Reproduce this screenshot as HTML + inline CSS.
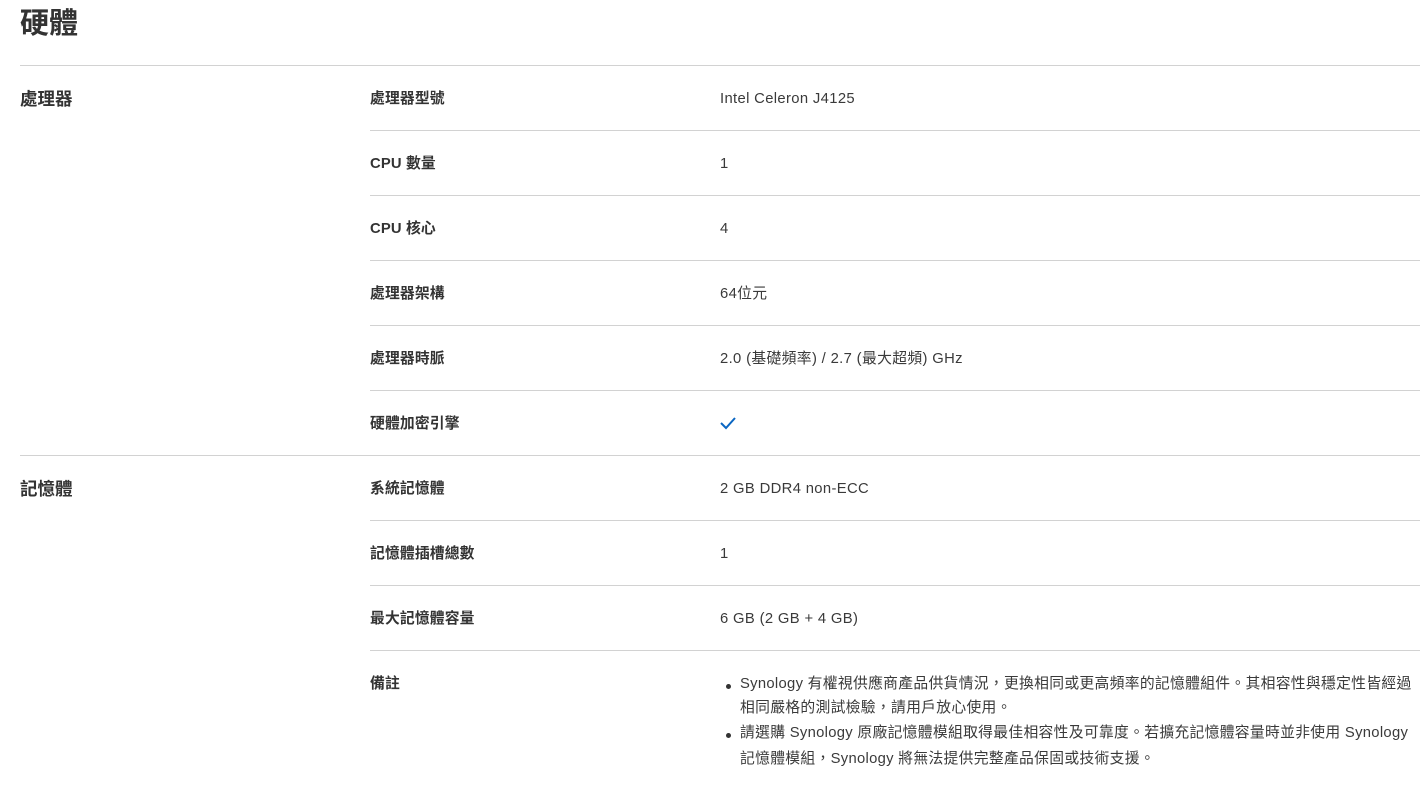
<!DOCTYPE html>
<html><head><meta charset="utf-8"><style>
*{margin:0;padding:0;box-sizing:border-box}
body{width:1426px;height:790px;background:#fff;font-family:"Liberation Sans","Noto Sans CJK TC",sans-serif;color:#333;position:relative;overflow:hidden}
h1{position:absolute;left:20px;top:4px;font-size:29px;font-weight:bold;line-height:40px;color:#333}
.hl{position:absolute;height:1px;background:#d2d2d2}
.g{position:absolute;left:20px;font-size:17.5px;font-weight:bold;line-height:22px}
.l{position:absolute;left:370px;font-size:14.8px;font-weight:bold;line-height:20px;letter-spacing:0.15px}
.v{position:absolute;left:720px;font-size:14.8px;line-height:20px;letter-spacing:0.35px;color:#3a3a3a}
.n{position:absolute;left:740px;font-size:14.8px;line-height:20px;letter-spacing:0.3px;white-space:nowrap;color:#3a3a3a}
.b{position:absolute;left:726px;width:5px;height:5px;border-radius:50%;background:#333}
</style></head><body>
<h1>硬體</h1>
<div class="hl" style="left:20px;width:1400px;top:65px"></div>
<div class="g" style="top:88px">處理器</div>
<div class="l" style="top:89px">處理器型號</div><div class="v" style="top:89px">Intel Celeron J4125</div>
<div class="hl" style="left:370px;width:1050px;top:130px"></div>
<div class="l" style="top:154px">CPU 數量</div><div class="v" style="top:154px">1</div>
<div class="hl" style="left:370px;width:1050px;top:195px"></div>
<div class="l" style="top:219px">CPU 核心</div><div class="v" style="top:219px">4</div>
<div class="hl" style="left:370px;width:1050px;top:260px"></div>
<div class="l" style="top:284px">處理器架構</div><div class="v" style="top:284px">64位元</div>
<div class="hl" style="left:370px;width:1050px;top:325px"></div>
<div class="l" style="top:349px">處理器時脈</div><div class="v" style="top:349px">2.0 (基礎頻率) / 2.7 (最大超頻) GHz</div>
<div class="hl" style="left:370px;width:1050px;top:390px"></div>
<div class="l" style="top:414px">硬體加密引擎</div>
<svg style="position:absolute;left:719px;top:415px" width="18" height="16" viewBox="0 0 18 16"><path d="M2 8 L7 13 L16 3" fill="none" stroke="#0a66c2" stroke-width="2"/></svg>
<div class="hl" style="left:20px;width:1400px;top:455px"></div>
<div class="g" style="top:478px">記憶體</div>
<div class="l" style="top:479px">系統記憶體</div><div class="v" style="top:479px">2 GB DDR4 non-ECC</div>
<div class="hl" style="left:370px;width:1050px;top:520px"></div>
<div class="l" style="top:544px">記憶體插槽總數</div><div class="v" style="top:544px">1</div>
<div class="hl" style="left:370px;width:1050px;top:585px"></div>
<div class="l" style="top:609px">最大記憶體容量</div><div class="v" style="top:609px">6 GB (2 GB + 4 GB)</div>
<div class="hl" style="left:370px;width:1050px;top:650px"></div>
<div class="l" style="top:674px">備註</div>
<div class="b" style="top:684px"></div>
<div class="n" style="top:674px">Synology 有權視供應商產品供貨情況，更換相同或更高頻率的記憶體組件。其相容性與穩定性皆經過</div>
<div class="n" style="top:698px">相同嚴格的測試檢驗，請用戶放心使用。</div>
<div class="b" style="top:733px"></div>
<div class="n" style="top:723px">請選購 Synology 原廠記憶體模組取得最佳相容性及可靠度。若擴充記憶體容量時並非使用 Synology</div>
<div class="n" style="top:749px">記憶體模組，Synology 將無法提供完整產品保固或技術支援。</div>
</body></html>
